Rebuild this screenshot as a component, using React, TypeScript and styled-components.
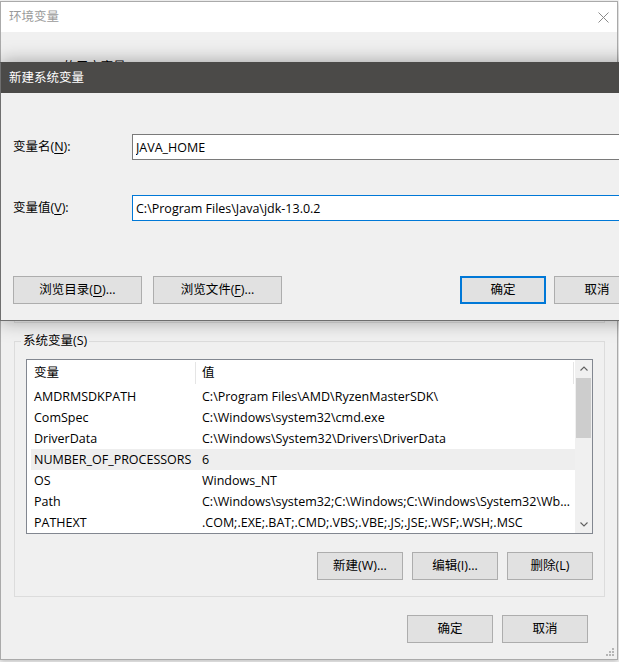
import React from "react";
import styled, { createGlobalStyle } from "styled-components";

const GlobalStyle = createGlobalStyle`
  html, body { margin: 0; padding: 0; background: #f4f4f4; overflow: hidden; }
  body {
    font-family: "Open Sans", "Noto Sans CJK SC", sans-serif;
    font-size: 12.5px;
    line-height: 16px;
    color: #000;
  }
  * { box-sizing: border-box; }
`;

const Desktop = styled.div`
  position: relative;
  width: 619px;
  height: 662px;
  overflow: hidden;
  padding-top: 1px;
`;

const Window = styled.div`
  position: relative;
  width: 618px;
  border: 1px solid #aaaaaa;
  background: #f0f0f0;
  box-shadow: 0 2px 5px rgba(0, 0, 0, 0.2);
  display: flex;
  flex-direction: column;
`;

const TitleBar = styled.div`
  height: 30px;
  background: #ffffff;
  display: flex;
  align-items: center;
  justify-content: space-between;
  padding-left: 8px;
`;

const WindowTitle = styled.span`
  color: #9a9a9a;
`;

const CloseButton = styled.div`
  width: 26px;
  height: 30px;
  display: flex;
  align-items: center;
  justify-content: center;
  margin-right: 1px;
`;

const WindowBody = styled.div`
  padding: 27px 12px 16px 13px;
  display: flex;
  flex-direction: column;
`;

const GroupBox = styled.fieldset`
  margin: 0;
  min-width: 0;
  border: 1px solid #dcdcdc;
  padding: 10px 11px 16px 11px;
  & + & {
    margin-top: 10px;
  }
`;

const GroupLabel = styled.legend`
  padding: 0 2px;
  margin-left: -5px;
  height: 16px;
  line-height: 16px;
`;

const ListBox = styled.div`
  height: 175px;
  border: 1px solid #828790;
  background: #ffffff;
  display: grid;
  grid-template-columns: 1fr 17px;
`;

const ListPane = styled.div`
  overflow: hidden;
  padding-left: 4px;
`;

const ListHeader = styled.div`
  display: grid;
  grid-template-columns: 165px 378px;
  height: 26px;
  padding-top: 2px;
  align-items: start;
`;

const HeaderCell = styled.div<{ $pad: number }>`
  height: 22px;
  line-height: 22px;
  padding-left: ${(p) => p.$pad}px;
  border-right: 1px solid #e5e5e5;
  white-space: nowrap;
`;

const Row = styled.div<{ $hover?: boolean }>`
  display: grid;
  grid-template-columns: 168px 1fr;
  height: 21px;
  line-height: 21px;
  background: ${(p) => (p.$hover ? "#eeeeee" : "transparent")};
`;

const Cell = styled.div`
  padding-left: 3px;
  padding-right: 5px;
  white-space: nowrap;
  overflow: hidden;
  text-overflow: ellipsis;
`;

const ScrollBar = styled.div`
  background: #f0f0f0;
  display: flex;
  flex-direction: column;
`;

const ScrollArrow = styled.div`
  height: 17px;
  display: flex;
  align-items: center;
  justify-content: center;
`;

const ScrollTrack = styled.div`
  flex: 1;
  padding: 1px 1px 0;
`;

const ScrollThumb = styled.div`
  height: 60px;
  background: #cdcdcd;
`;

const ButtonRow = styled.div`
  margin-top: 18px;
  display: flex;
  justify-content: flex-end;
  gap: 9px;
`;

const FooterRow = styled.div`
  margin-top: 18px;
  padding-right: 17px;
  display: flex;
  justify-content: flex-end;
  gap: 9px;
`;

const Button = styled.button<{ $width: number; $primary?: boolean }>`
  width: ${(p) => p.$width}px;
  height: 28px;
  padding: 0;
  margin: 0;
  background: #e1e1e1;
  border: ${(p) => (p.$primary ? "2px solid #0078d7" : "1px solid #adadad")};
  font: inherit;
  line-height: 16px;
  color: #000;
  display: flex;
  align-items: center;
  justify-content: center;
  white-space: nowrap;
`;

const Key = styled.span`
  text-decoration: underline;
  text-underline-offset: 2px;
`;

const Grip = styled.div`
  position: absolute;
  right: 2px;
  bottom: 2px;
  width: 10px;
  height: 10px;
  display: flex;
`;

const Dialog = styled.div`
  position: absolute;
  left: 0;
  top: 62px;
  width: 653px;
  border: 1px solid #6f6f6f;
  border-top-color: #4b4a48;
  background: #f0f0f0;
  box-shadow: 0 0 18px rgba(0, 0, 0, 0.35);
`;

const DialogTitleBar = styled.div`
  height: 30px;
  background: #4b4a48;
  color: #ffffff;
  display: flex;
  align-items: center;
  padding-left: 8px;
`;

const DialogBody = styled.div`
  padding: 41px 12px 16px 12px;
  display: flex;
  flex-direction: column;
`;

const FieldRow = styled.div`
  display: grid;
  grid-template-columns: 119px 1fr;
  align-items: center;
  & + & {
    margin-top: 35px;
  }
`;

const FieldLabel = styled.label`
  white-space: nowrap;
`;

const TextField = styled.input<{ $focused?: boolean }>`
  width: 100%;
  height: 26px;
  margin: 0;
  padding: 0 3px;
  border: 1px solid ${(p) => (p.$focused ? "#0078d7" : "#7a7a7a")};
  background: #ffffff;
  font: inherit;
  color: #000;
  outline: none;
`;

const DialogButtons = styled.div`
  margin-top: 55px;
  display: flex;
  align-items: center;
`;

const BrowseGroup = styled.div`
  display: flex;
  gap: 11px;
`;

const ConfirmGroup = styled.div`
  margin-left: auto;
  display: flex;
  gap: 8px;
`;

type Variable = { name: string; value: string };

const userVars: Variable[] = [
  { name: "OneDrive", value: "C:\\Users\\owner\\OneDrive" },
  { name: "Path", value: "C:\\Users\\owner\\AppData\\Local\\Microsoft\\WindowsApps;" },
  { name: "TEMP", value: "C:\\Users\\owner\\AppData\\Local\\Temp" },
  { name: "TMP", value: "C:\\Users\\owner\\AppData\\Local\\Temp" },
];

const systemVars: Variable[] = [
  { name: "AMDRMSDKPATH", value: "C:\\Program Files\\AMD\\RyzenMasterSDK\\" },
  { name: "ComSpec", value: "C:\\Windows\\system32\\cmd.exe" },
  { name: "DriverData", value: "C:\\Windows\\System32\\Drivers\\DriverData" },
  { name: "NUMBER_OF_PROCESSORS", value: "6" },
  { name: "OS", value: "Windows_NT" },
  {
    name: "Path",
    value:
      "C:\\Windows\\system32;C:\\Windows;C:\\Windows\\System32\\Wbem;C:\\Windows\\System32\\WindowsPowerShell\\v1.0\\",
  },
  { name: "PATHEXT", value: ".COM;.EXE;.BAT;.CMD;.VBS;.VBE;.JS;.JSE;.WSF;.WSH;.MSC" },
];

const Chevron = ({ up }: { up?: boolean }) => (
  <svg width="8" height="5" viewBox="0 0 8 5">
    <polyline
      points={up ? "0.5,4.5 4,1 7.5,4.5" : "0.5,0.5 4,4 7.5,0.5"}
      fill="none"
      stroke="#606060"
      strokeWidth="1.1"
    />
  </svg>
);

const VarList = ({ vars, hover }: { vars: Variable[]; hover?: number }) => (
  <ListBox>
    <ListPane>
      <ListHeader>
        <HeaderCell $pad={3}>变量</HeaderCell>
        <HeaderCell $pad={6}>值</HeaderCell>
      </ListHeader>
      {vars.map((v, i) => (
        <Row key={v.name + i} $hover={i === hover}>
          <Cell>{v.name}</Cell>
          <Cell>{v.value}</Cell>
        </Row>
      ))}
    </ListPane>
    <ScrollBar>
      <ScrollArrow>
        <Chevron up />
      </ScrollArrow>
      <ScrollTrack>
        <ScrollThumb />
      </ScrollTrack>
      <ScrollArrow>
        <Chevron />
      </ScrollArrow>
    </ScrollBar>
  </ListBox>
);

const GroupButtons = ({ labels }: { labels: [string, string, string] }) => (
  <ButtonRow>
    {labels.map((label) => (
      <Button key={label} $width={86}>
        {label}
      </Button>
    ))}
  </ButtonRow>
);

export default function App() {
  return (
    <>
      <GlobalStyle />
      <Desktop>
        <Window>
          <TitleBar>
            <WindowTitle>环境变量</WindowTitle>
            <CloseButton>
              <svg width="11" height="11" viewBox="0 0 11 11">
                <path d="M0.5 0.5 L10.5 10.5 M10.5 0.5 L0.5 10.5" stroke="#8a8a8a" strokeWidth="1" />
              </svg>
            </CloseButton>
          </TitleBar>
          <WindowBody>
            <GroupBox>
              <GroupLabel>owner 的用户变量(U)</GroupLabel>
              <VarList vars={userVars} />
              <GroupButtons labels={["新建(N)...", "编辑(E)...", "删除(D)"]} />
            </GroupBox>
            <GroupBox>
              <GroupLabel>系统变量(S)</GroupLabel>
              <VarList vars={systemVars} hover={3} />
              <GroupButtons labels={["新建(W)...", "编辑(I)...", "删除(L)"]} />
            </GroupBox>
            <FooterRow>
              <Button $width={86}>确定</Button>
              <Button $width={86}>取消</Button>
            </FooterRow>
          </WindowBody>
          <Grip>
            <svg width="10" height="10" viewBox="0 0 10 10">
              {[
                [8, 2],
                [8, 5],
                [5, 5],
                [8, 8],
                [5, 8],
                [2, 8],
              ].map(([x, y]) => (
                <rect key={`${x}-${y}`} x={x - 1} y={y - 1} width="2" height="2" fill="#b5b5b5" />
              ))}
            </svg>
          </Grip>
        </Window>

        <Dialog>
          <DialogTitleBar>新建系统变量</DialogTitleBar>
          <DialogBody>
            <FieldRow>
              <FieldLabel>
                变量名(<Key>N</Key>):
              </FieldLabel>
              <TextField readOnly defaultValue="JAVA_HOME" />
            </FieldRow>
            <FieldRow>
              <FieldLabel>
                变量值(<Key>V</Key>):
              </FieldLabel>
              <TextField $focused readOnly defaultValue="C:\Program Files\Java\jdk-13.0.2" />
            </FieldRow>
            <DialogButtons>
              <BrowseGroup>
                <Button $width={129}>
                  浏览目录(<Key>D</Key>)...
                </Button>
                <Button $width={129}>
                  浏览文件(<Key>F</Key>)...
                </Button>
              </BrowseGroup>
              <ConfirmGroup>
                <Button $width={86} $primary>
                  确定
                </Button>
                <Button $width={86}>取消</Button>
              </ConfirmGroup>
            </DialogButtons>
          </DialogBody>
        </Dialog>
      </Desktop>
    </>
  );
}
